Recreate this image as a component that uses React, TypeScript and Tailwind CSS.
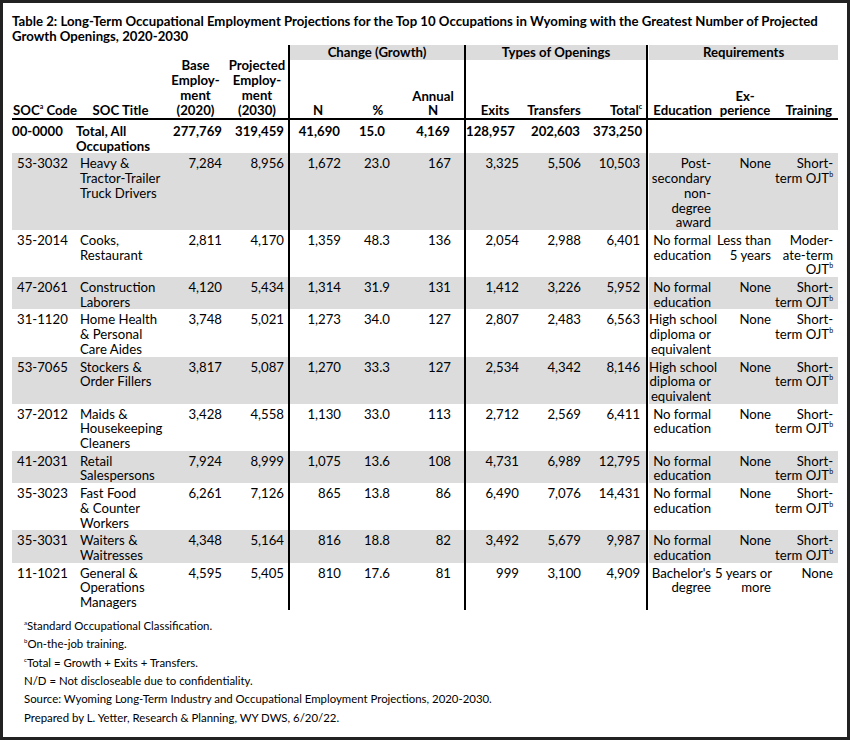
import React from 'react';

const Sup = ({ children }: { children: React.ReactNode }) => (
  <sup className="text-[7px] top-[-6px]">{children}</sup>
);

const shortOjt = (
  <>
    Short-
    <br />
    term OJT<Sup>b</Sup>
  </>
);
const noFormal = (
  <>
    No formal
    <br />
    education
  </>
);
const highSchool = (
  <>
    High school
    <br />
    diploma or
    <br />
    equivalent
  </>
);

type Row = {
  soc: string;
  title: string[];
  nums: string[];
  edu: React.ReactNode;
  exp: React.ReactNode;
  train: React.ReactNode;
};

const rows: Row[] = [
  {
    soc: '53-3032',
    title: ['Heavy &', 'Tractor-Trailer', 'Truck Drivers'],
    nums: ['7,284', '8,956', '1,672', '23.0', '167', '3,325', '5,506', '10,503'],
    edu: (
      <>
        Post-
        <br />
        secondary
        <br />
        non-
        <br />
        degree
        <br />
        award
      </>
    ),
    exp: 'None',
    train: shortOjt,
  },
  {
    soc: '35-2014',
    title: ['Cooks,', 'Restaurant'],
    nums: ['2,811', '4,170', '1,359', '48.3', '136', '2,054', '2,988', '6,401'],
    edu: noFormal,
    exp: (
      <>
        Less than
        <br />5 years
      </>
    ),
    train: (
      <>
        Moder-
        <br />
        ate-term
        <br />
        OJT<Sup>b</Sup>
      </>
    ),
  },
  {
    soc: '47-2061',
    title: ['Construction', 'Laborers'],
    nums: ['4,120', '5,434', '1,314', '31.9', '131', '1,412', '3,226', '5,952'],
    edu: noFormal,
    exp: 'None',
    train: shortOjt,
  },
  {
    soc: '31-1120',
    title: ['Home Health', '& Personal', 'Care Aides'],
    nums: ['3,748', '5,021', '1,273', '34.0', '127', '2,807', '2,483', '6,563'],
    edu: highSchool,
    exp: 'None',
    train: shortOjt,
  },
  {
    soc: '53-7065',
    title: ['Stockers &', 'Order Fillers'],
    nums: ['3,817', '5,087', '1,270', '33.3', '127', '2,534', '4,342', '8,146'],
    edu: highSchool,
    exp: 'None',
    train: shortOjt,
  },
  {
    soc: '37-2012',
    title: ['Maids &', 'Housekeeping', 'Cleaners'],
    nums: ['3,428', '4,558', '1,130', '33.0', '113', '2,712', '2,569', '6,411'],
    edu: noFormal,
    exp: 'None',
    train: shortOjt,
  },
  {
    soc: '41-2031',
    title: ['Retail', 'Salespersons'],
    nums: ['7,924', '8,999', '1,075', '13.6', '108', '4,731', '6,989', '12,795'],
    edu: noFormal,
    exp: 'None',
    train: shortOjt,
  },
  {
    soc: '35-3023',
    title: ['Fast Food', '& Counter', 'Workers'],
    nums: ['6,261', '7,126', '865', '13.8', '86', '6,490', '7,076', '14,431'],
    edu: noFormal,
    exp: 'None',
    train: shortOjt,
  },
  {
    soc: '35-3031',
    title: ['Waiters &', 'Waitresses'],
    nums: ['4,348', '5,164', '816', '18.8', '82', '3,492', '5,679', '9,987'],
    edu: noFormal,
    exp: 'None',
    train: shortOjt,
  },
  {
    soc: '11-1021',
    title: ['General &', 'Operations', 'Managers'],
    nums: ['4,595', '5,405', '810', '17.6', '81', '999', '3,100', '4,909'],
    edu: (
      <>
        Bachelor's
        <br />
        degree
      </>
    ),
    exp: (
      <>
        5 years or
        <br />
        more
      </>
    ),
    train: 'None',
  },
];

// right padding for the eight number columns
const numPad = ['pr-[4px]', 'pr-[4px]', 'pr-[5px]', 'pr-[20px]', 'pr-[13px]', 'pr-[5px]', 'pr-[3px]', 'pr-[6px]'];
const totalPad = ['pr-[4px]', 'pr-[4px]', 'pr-[6px]', 'pr-[25px]', 'pr-[14px]', 'pr-[19px]', 'pr-[4px]', 'pr-[4px]'];

const Lines = ({ lines }: { lines: string[] }) => (
  <>
    {lines.map((l, i) => (
      <React.Fragment key={i}>
        {i > 0 && <br />}
        {l}
      </React.Fragment>
    ))}
  </>
);

const NumCells = ({ nums, bg, pads }: { nums: string[]; bg: string; pads: string[] }) => (
  <>
    {nums.slice(0, 2).map((n, i) => (
      <td key={i} className={`${bg} text-right ${pads[i]}`}>
        {n}
      </td>
    ))}
    <td className="bg-black" />
    {nums.slice(2, 5).map((n, i) => (
      <td key={i} className={`${bg} text-right ${pads[i + 2]}`}>
        {n}
      </td>
    ))}
    <td className="bg-black" />
    {nums.slice(5, 8).map((n, i) => (
      <td key={i} className={`${bg} text-right ${pads[i + 5]}`}>
        {n}
      </td>
    ))}
    <td className="bg-black" />
    <td className="bg-white" />
  </>
);

export default function App() {
  const hb = 'border-b-2 border-black';
  return (
    <div className="w-[850px] h-[740px] border-[3px] border-[#222] bg-white pt-[11px] pl-[9px] font-['Lato',sans-serif] text-black text-[13.2px]">
      <h1 className="font-bold leading-[15px] whitespace-nowrap mb-[1px]">
        Table 2: Long-Term Occupational Employment Projections for the Top 10 Occupations in Wyoming with the Greatest Number of Projected
        <br />
        Growth Openings, 2020-2030
      </h1>

      <table className="table-fixed border-separate border-spacing-0 w-[826px] whitespace-nowrap leading-[14.7px]">
        <colgroup>
          <col className="w-[64px]" />
          <col className="w-[89px]" />
          <col className="w-[61px]" />
          <col className="w-[62px]" />
          <col className="w-[2px]" />
          <col className="w-[56px]" />
          <col className="w-[64px]" />
          <col className="w-[54px]" />
          <col className="w-[2px]" />
          <col className="w-[58px]" />
          <col className="w-[60px]" />
          <col className="w-[62px]" />
          <col className="w-[2px]" />
          <col className="w-[1px]" />
          <col className="w-[66px]" />
          <col className="w-[60px]" />
          <col className="w-[63px]" />
        </colgroup>
        <thead className="align-bottom font-bold">
          <tr className="h-[15px] leading-[15px]">
            <th rowSpan={2} className={`${hb} text-left pl-[1px] font-bold`}>
              SOC<Sup>a</Sup> Code
            </th>
            <th rowSpan={2} className={`${hb} text-center font-bold`}>
              SOC Title
            </th>
            <th rowSpan={2} className={`${hb} text-center font-bold`}>
              Base
              <br />
              Employ-
              <br />
              ment
              <br />
              (2020)
            </th>
            <th rowSpan={2} className={`${hb} text-center font-bold`}>
              Projected
              <br />
              Employ-
              <br />
              ment
              <br />
              (2030)
            </th>
            <th className="bg-black" />
            <th colSpan={3} className="bg-[#dcdcdd] text-center font-bold align-middle">
              Change (Growth)
            </th>
            <th className="bg-black" />
            <th colSpan={3} className="bg-[#dcdcdd] text-center font-bold align-middle">
              Types of Openings
            </th>
            <th className="bg-black" />
            <th className="bg-white" />
            <th colSpan={3} className="bg-[#dcdcdd] text-center font-bold align-middle">
              Requirements
            </th>
          </tr>
          <tr className="h-[60px]">
            <th className={`bg-black ${hb}`} />
            <th className={`${hb} text-center font-bold`}>N</th>
            <th className={`${hb} text-center font-bold`}>%</th>
            <th className={`${hb} text-center pr-[8px] font-bold`}>
              Annual
              <br />N
            </th>
            <th className={`bg-black ${hb}`} />
            <th className={`${hb} text-center font-bold`}>Exits</th>
            <th className={`${hb} text-center font-bold`}>Transfers</th>
            <th className={`${hb} text-right pr-[4px] font-bold`}>
              Total<Sup>c</Sup>
            </th>
            <th className={`bg-black ${hb}`} />
            <th className={hb} />
            <th className={`${hb} text-right pr-[3px] font-bold`}>Education</th>
            <th className={`${hb} text-center font-bold`}>
              Ex-
              <br />
              perience
            </th>
            <th className={`${hb} text-right pr-[6px] font-bold`}>Training</th>
          </tr>
        </thead>
        <tbody className="align-top">
          <tr className="font-bold">
            <td className="pt-[4px]">00-0000</td>
            <td className="pt-[4px]">
              Total, All
              <br />
              Occupations
            </td>
            <NumCells nums={['277,769', '319,459', '41,690', '15.0', '4,169', '128,957', '202,603', '373,250']} bg="pt-[4px]" pads={totalPad} />
            <td />
            <td />
            <td />
          </tr>
          {rows.map((r, i) => {
            const bg = i % 2 === 0 ? 'bg-[#dcdcdd] pt-[3px]' : 'bg-white pt-[3px]';
            return (
              <tr key={r.soc}>
                <td className={`${bg} pl-[5px]`}>{r.soc}</td>
                <td className={`${bg} pl-[4px]`}>
                  <Lines lines={r.title} />
                </td>
                <NumCells nums={r.nums} bg={bg} pads={numPad} />
                <td className={`${bg} text-right pr-[4px]`}>{r.edu}</td>
                <td className={`${bg} text-right pr-[4px]`}>{r.exp}</td>
                <td className={`${bg} text-right pr-[5px]`}>{r.train}</td>
              </tr>
            );
          })}
        </tbody>
      </table>

      <div className="mt-[7px] ml-[12px] text-[11.4px] leading-[18.4px] whitespace-nowrap">
        <p>
          <sup className="text-[6px] top-[-5px]">a</sup>Standard Occupational Classification.
        </p>
        <p>
          <sup className="text-[6px] top-[-5px]">b</sup>On-the-job training.
        </p>
        <p>
          <sup className="text-[6px] top-[-5px]">c</sup>Total = Growth + Exits + Transfers.
        </p>
        <p>N/D = Not discloseable due to confidentiality.</p>
        <p>Source: Wyoming Long-Term Industry and Occupational Employment Projections, 2020-2030.</p>
        <p>Prepared by L. Yetter, Research &amp; Planning, WY DWS, 6/20/22.</p>
      </div>
    </div>
  );
}
